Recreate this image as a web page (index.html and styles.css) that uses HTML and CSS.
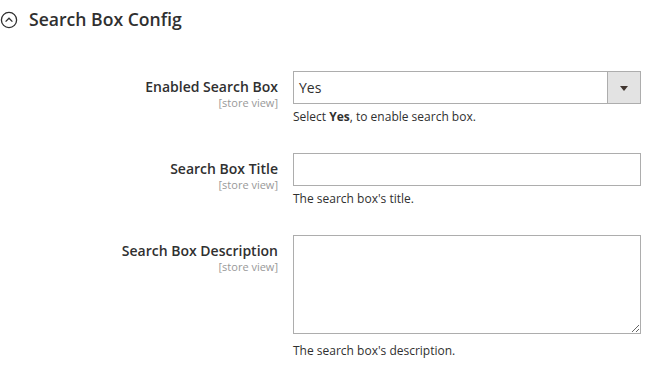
FILE: index.html
```html
<!DOCTYPE html>
<html lang="en">
<head>
    <meta charset="UTF-8">
    <title>Search Box Config</title>
    <link rel="stylesheet" href="styles.css">
</head>
<body>

    <div class="section-title">
        <svg class="toggle-icon" width="18" height="18" viewBox="0 0 18 18">
            <circle cx="9" cy="9" r="7.6" fill="none" stroke="#303030" stroke-width="1.3"/>
            <path d="M5.6 10.6 L9 7.2 L12.4 10.6" fill="none" stroke="#303030" stroke-width="1.3"/>
        </svg>
        <span>Search Box Config</span>
    </div>

    <div class="config-form">
        <div class="config-row">
            <div class="config-label">
                <span>Enabled Search Box</span>
                <span class="scope">[store view]</span>
            </div>
            <div class="config-value">
                <div class="select">
                    <span class="select-text">Yes</span>
                    <span class="select-arrow"></span>
                </div>
                <p class="note">Select <strong>Yes</strong>, to enable search box.</p>
            </div>
        </div>

        <div class="config-row">
            <div class="config-label">
                <span>Search Box Title</span>
                <span class="scope">[store view]</span>
            </div>
            <div class="config-value">
                <input type="text" class="input-text">
                <p class="note">The search box's title.</p>
            </div>
        </div>

        <div class="config-row">
            <div class="config-label">
                <span>Search Box Description</span>
                <span class="scope">[store view]</span>
            </div>
            <div class="config-value">
                <textarea class="textarea"></textarea>
                <p class="note note-textarea">The search box's description.</p>
            </div>
        </div>
    </div>

</body>
</html>
```

FILE: styles.css
```css
body {
    font-family: 'Open Sans', 'Liberation Sans', sans-serif;
    background-color: #fff;
    color: #303030;
    margin: 0;
    padding: 0;
}
.section-title {
    display: flex;
    align-items: center;
    gap: 11px;
    padding: 8px 0 0 0;
    height: 22px;
    font-size: 17.6px;
    font-weight: 600;
    color: #303030;
}
.toggle-icon {
    display: block;
    margin-top: 1px;
}
.config-form {
    display: flex;
    flex-direction: column;
    gap: 27px;
    margin-top: 41px;
}
.config-row {
    display: grid;
    grid-template-columns: 278px 348px;
    column-gap: 15px;
}
.config-label {
    display: flex;
    flex-direction: column;
    align-items: flex-end;
    padding-top: 7px;
    font-size: 14px;
    font-weight: 600;
    line-height: 18px;
}
.config-label .scope {
    font-size: 11px;
    font-weight: 400;
    color: #999;
    line-height: 13px;
}
.select {
    display: flex;
    height: 31px;
    border: 1px solid #adadad;
    box-sizing: content-box;
}
.select-text {
    flex: 1;
    padding-left: 5px;
    font-size: 14px;
    line-height: 31px;
}
.select-arrow {
    width: 32px;
    background-color: #e3e3e3;
    border-left: 1px solid #adadad;
    position: relative;
}
.select-arrow::after {
    content: '';
    position: absolute;
    left: 12px;
    top: 14px;
    border-left: 4px solid transparent;
    border-right: 4px solid transparent;
    border-top: 5px solid #41362f;
}
.input-text {
    display: block;
    width: 348px;
    height: 33px;
    box-sizing: border-box;
    border: 1px solid #adadad;
    margin: 0;
    padding: 0 8px;
    font-family: inherit;
    font-size: 14px;
    outline: none;
}
.textarea {
    display: block;
    width: 348px;
    height: 99px;
    box-sizing: border-box;
    border: 1px solid #adadad;
    margin: 0;
    padding: 6px 8px;
    font-family: inherit;
    font-size: 14px;
    resize: vertical;
    outline: none;
}
.note {
    margin: 4px 0 0 0;
    font-size: 12px;
    line-height: 18px;
    color: #303030;
}
.note-textarea {
    margin-top: 8px;
}
```
